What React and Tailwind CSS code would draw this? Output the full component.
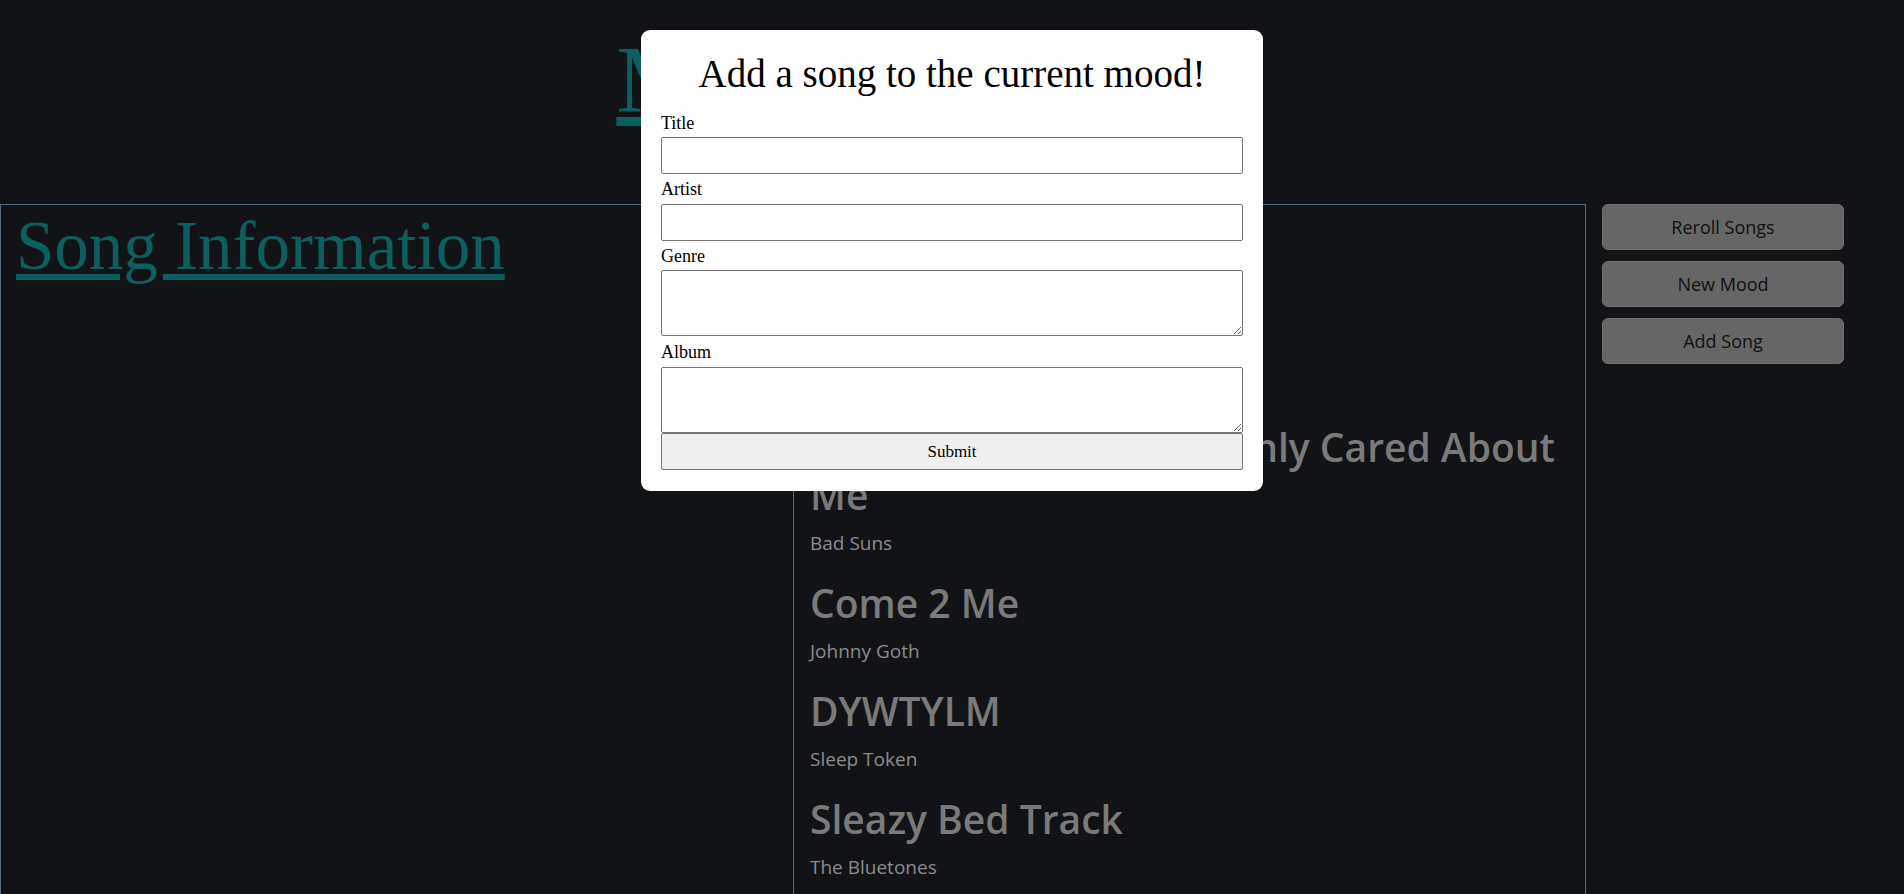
import { useState } from 'react'

const songs = [
  { title: 'Sweater Weather', artist: 'The Neighbourhood' },
  { title: 'Heather', artist: 'Conan Gray' },
  { title: 'Sometimes I Wished I Only Cared About Me', artist: 'Bad Suns' },
  { title: 'Come 2 Me', artist: 'Johnny Goth' },
  { title: 'DYWTYLM', artist: 'Sleep Token' },
  { title: 'Sleazy Bed Track', artist: 'The Bluetones' },
  { title: 'Cherry Waves', artist: 'Deftones' },
]

function AddSongModal({ onSubmit }) {
  const [form, setForm] = useState({ title: '', artist: '', genre: '', album: '' })

  const update = (key) => (e) => setForm(prev => ({ ...prev, [key]: e.target.value }))

  const handleSubmit = (e) => {
    e.preventDefault()
    onSubmit(form)
  }

  return (
    <div className="fixed top-[30px] left-1/2 -translate-x-1/2 w-[622px] bg-white rounded-[9px] px-5 pt-5 pb-[21px] font-['Liberation_Serif',serif] text-black">
      <h2 className="text-[39px] leading-[47px] text-center">Add a song to the current mood!</h2>
      <form onSubmit={handleSubmit} className="flex flex-col mt-[15px]">
        <label className="text-[18px] leading-[22px]">Title</label>
        <input
          value={form.title}
          onChange={update('title')}
          className="mt-[3px] h-[37px] border border-[#767676] rounded-[2px] px-1"
        />
        <label className="mt-1 text-[18px] leading-[22px]">Artist</label>
        <input
          value={form.artist}
          onChange={update('artist')}
          className="mt-1 h-[37px] border border-[#767676] rounded-[2px] px-1"
        />
        <label className="mt-1 text-[18px] leading-[22px]">Genre</label>
        <textarea
          value={form.genre}
          onChange={update('genre')}
          className="mt-[3px] h-[66px] border border-[#767676] rounded-[2px] px-1"
        />
        <label className="mt-[5px] text-[18px] leading-[22px]">Album</label>
        <textarea
          value={form.album}
          onChange={update('album')}
          className="mt-1 h-[66px] border border-[#767676] rounded-[2px] px-1"
        />
        <button
          type="submit"
          className="h-[37px] bg-[#efefef] border border-[#767676] rounded-[2px] text-[17px]"
        >
          Submit
        </button>
      </form>
    </div>
  )
}

export default function App() {
  const [list, setList] = useState(songs)

  const addSong = (song) => {
    if (song.title) setList(prev => [...prev, song])
  }

  return (
    <div className="min-h-screen bg-[#121316] font-['Open_Sans',sans-serif]">
      {/* Header */}
      <div className="h-[204px] flex justify-center">
        <h1 className="mt-[32px] mr-[178px] font-['Liberation_Serif',serif] text-[96px] leading-none text-[#0d5e5f] underline decoration-[9px] underline-offset-[5px]">
          Mood Music
        </h1>
      </div>

      <div className="flex items-stretch">
        {/* Song information */}
        <div className="w-[794px] min-h-[760px] border border-[#56688a]">
          <h2 className="pt-[7px] pl-[15px] font-['Liberation_Serif',serif] text-[69px] leading-none text-[#0d5e5f] underline decoration-[6px] underline-offset-[5px]">
            Song Information
          </h2>
        </div>

        {/* Song list */}
        <div className="w-[792px] border-y border-r border-[#56688a] pl-4 pr-4 pt-[2px]">
          {list.map((song, i) => (
            <div key={i} className="mb-6">
              <h3 className="text-[39px] leading-[48px] font-semibold text-[#7a7a7a]">{song.title}</h3>
              <p className="mt-3 text-[19px] leading-6 text-[#8c8c8c]">{song.artist}</p>
            </div>
          ))}
        </div>

        {/* Actions */}
        <div className="ml-4 w-[242px] self-start flex flex-col gap-[11px]">
          {['Reroll Songs', 'New Mood', 'Add Song'].map(label => (
            <button
              key={label}
              className="h-[46px] bg-[#666666] border border-[#6f6f6f] rounded-[6px] text-[18px] text-[#111111]"
            >
              {label}
            </button>
          ))}
        </div>
      </div>

      <AddSongModal onSubmit={addSong} />
    </div>
  )
}
